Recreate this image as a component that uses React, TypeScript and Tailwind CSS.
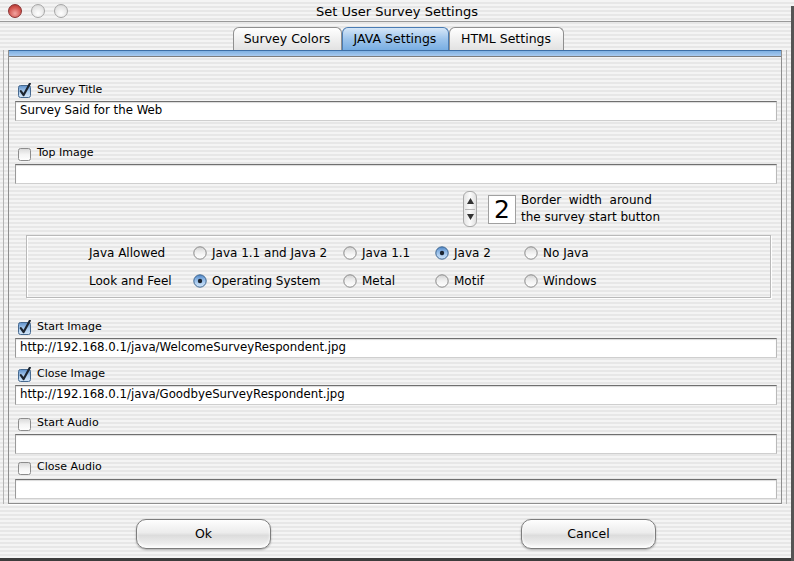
import React from "react";

const stripes =
  "bg-[repeating-linear-gradient(to_bottom,#f4f4f4_0px,#f4f4f4_2px,#e7e7e7_2px,#e7e7e7_4px)]";

const CheckBox = ({ checked }: { checked: boolean }) => (
  <svg width="15" height="15" viewBox="0 0 15 15" className="shrink-0">
    <defs>
      <linearGradient id="cbOff" x1="0" y1="0" x2="0" y2="1">
        <stop offset="0" stopColor="#d8d8d8" />
        <stop offset="0.5" stopColor="#f4f4f4" />
        <stop offset="1" stopColor="#ffffff" />
      </linearGradient>
      <linearGradient id="cbOn" x1="0" y1="0" x2="0" y2="1">
        <stop offset="0" stopColor="#5d8fc9" />
        <stop offset="0.5" stopColor="#a9cbee" />
        <stop offset="1" stopColor="#d4e6f8" />
      </linearGradient>
    </defs>
    <rect
      x="1.5"
      y="2.5"
      width="12"
      height="12"
      rx="2"
      fill={checked ? "url(#cbOn)" : "url(#cbOff)"}
      stroke={checked ? "#46698f" : "#8c8c8c"}
    />
    {checked && (
      <path
        d="M3.8 8.2 L6.6 12 L12.8 0.8"
        fill="none"
        stroke="#1d2530"
        strokeWidth="2.2"
        strokeLinecap="round"
        strokeLinejoin="round"
      />
    )}
  </svg>
);

const Radio = ({ checked }: { checked: boolean }) => (
  <svg width="14" height="14" viewBox="0 0 14 14" className="shrink-0">
    <defs>
      <linearGradient id="rOff" x1="0" y1="0" x2="0" y2="1">
        <stop offset="0" stopColor="#d2d2d2" />
        <stop offset="0.5" stopColor="#f2f2f2" />
        <stop offset="1" stopColor="#ffffff" />
      </linearGradient>
      <linearGradient id="rOn" x1="0" y1="0" x2="0" y2="1">
        <stop offset="0" stopColor="#4f86c6" />
        <stop offset="0.5" stopColor="#9fc4ec" />
        <stop offset="1" stopColor="#d2e5f8" />
      </linearGradient>
    </defs>
    <circle
      cx="7"
      cy="7"
      r="6.2"
      fill={checked ? "url(#rOn)" : "url(#rOff)"}
      stroke={checked ? "#3f6690" : "#8a8a8a"}
    />
    {checked && <circle cx="7" cy="7" r="2.2" fill="#1b2430" />}
  </svg>
);

const Field = ({ value = "" }: { value?: string }) => (
  <div className="ml-[6px] mr-[4px] flex h-[20px] items-center border border-t-[#6f6f6f] border-r-[#b9b9b9] border-b-[#cfcfcf] border-l-[#9a9a9a] bg-white pl-[4px] text-[11.75px] text-black shadow-[inset_0_1px_1px_rgba(0,0,0,0.15)]">
    {value}
  </div>
);

const CheckRow = ({
  label,
  checked,
  className,
}: {
  label: string;
  checked: boolean;
  className: string;
}) => (
  <div className={`flex h-[14px] items-center gap-[5px] pl-[8px] text-[11px] text-black ${className}`}>
    <CheckBox checked={checked} />
    <span>{label}</span>
  </div>
);

const RadioItem = ({
  label,
  checked,
  width,
}: {
  label: string;
  checked?: boolean;
  width: string;
}) => (
  <div className={`flex items-center gap-[5px] ${width}`}>
    <Radio checked={!!checked} />
    <span>{label}</span>
  </div>
);

const Tab = ({ label, active }: { label: string; active?: boolean }) => (
  <div
    className={
      active
        ? "flex h-[23px] w-[107px] items-center justify-center rounded-t-[6px] border border-b-0 border-[#4a7cb3] bg-[linear-gradient(to_bottom,#d6e7f8,#9ec5ec_50%,#79aee2)] text-[12.5px] text-black"
        : "flex h-[23px] items-center justify-center rounded-t-[6px] border border-b-0 border-[#8f8f8f] bg-[linear-gradient(to_bottom,#ffffff,#f0f0f0_50%,#e2e2e2)] text-[12.5px] text-black"
    }
  >
    {label}
  </div>
);

const AquaButton = ({ label }: { label: string }) => (
  <div className="flex h-[30px] w-[135px] items-center justify-center rounded-[10px] border border-[#7d7d7d] bg-[linear-gradient(to_bottom,#fefefe,#ececec_45%,#dcdcdc_55%,#f6f6f6)] text-[12.5px] text-black shadow-[0_1px_2px_rgba(0,0,0,0.3),inset_0_-2px_3px_rgba(255,255,255,0.9)]">
    {label}
  </div>
);

export default function App() {
  return (
    <div
      className={`relative h-[561px] w-[794px] overflow-hidden ${stripes} font-['DejaVu_Sans',sans-serif]`}
    >
      {/* title bar */}
      <div className="relative flex h-[22px] items-center border-b border-[#9a9a9a]">
        <div className="flex items-center gap-[9px] pl-[8px]">
          <div className="h-[14px] w-[14px] rounded-full border border-[#8a3030] bg-[radial-gradient(circle_at_50%_70%,#f3a4a0,#d0524c_60%,#a02c28)]" />
          <div className="h-[14px] w-[14px] rounded-full border border-[#a6a6a6] bg-[radial-gradient(circle_at_50%_70%,#ffffff,#e6e6e6_60%,#cfcfcf)]" />
          <div className="h-[14px] w-[14px] rounded-full border border-[#a6a6a6] bg-[radial-gradient(circle_at_50%_70%,#ffffff,#e6e6e6_60%,#cfcfcf)]" />
        </div>
        <div className="absolute inset-x-0 top-[1px] flex h-[21px] items-center justify-center text-[13px] text-black">
          Set User Survey Settings
        </div>
      </div>

      {/* tabs */}
      <div className="flex h-[28px] items-end justify-center pl-[2px]">
        <div className="flex">
          <div className="w-[109px]">
            <Tab label="Survey Colors" />
          </div>
          <Tab label="JAVA Settings" active />
          <div className="w-[115px]">
            <Tab label="HTML Settings" />
          </div>
        </div>
      </div>

      {/* panel */}
      <div className="ml-[3px] mr-[7px] border-x border-[#b4b4b4] px-[4px]">
        <div className="flex h-[454px] flex-col border-x border-b border-[#8e8e8e] shadow-[0_1px_0_#ffffff]">
          <div className="h-[6px] border-t border-[#3d6fa6] bg-[linear-gradient(to_bottom,#7fb0e2,#a9cbef)]" />
          <div className="h-px bg-[#7d7d7d]" />

          <CheckRow label="Survey Title" checked className="mt-[26px]" />
          <div className="mt-[4px]">
            <Field value="Survey Said for the Web" />
          </div>

          <CheckRow label="Top Image" checked={false} className="mt-[25px]" />
          <div className="mt-[4px]">
            <Field />
          </div>

          {/* border width spinner */}
          <div className="mt-[7px] flex h-[36px] items-center pl-[454px]">
            <div className="flex h-[36px] w-[14px] flex-col items-center justify-between rounded-[6px] border border-[#a9a9a9] bg-[linear-gradient(to_right,#e4e4e4,#fbfbfb,#e0e0e0)] py-[6px]">
              <svg width="7" height="6" viewBox="0 0 7 6">
                <path d="M3.5 0 L7 6 L0 6 Z" fill="#333" />
              </svg>
              <div className="h-px w-[10px] bg-[#b8b8b8]" />
              <svg width="7" height="6" viewBox="0 0 7 6">
                <path d="M0 0 L7 0 L3.5 6 Z" fill="#333" />
              </svg>
            </div>
            <div className="ml-[11px] flex h-[29px] w-[28px] items-center justify-center border border-[#a0a0a0] bg-white text-[25px] font-medium leading-none text-black">
              2
            </div>
            <div className="ml-[5px] flex flex-col text-[12px] leading-[17px] text-black">
              <span>Border&nbsp; width&nbsp; around</span>
              <span>the survey start button</span>
            </div>
          </div>

          {/* group box */}
          <div className="ml-[17px] mr-[10px] mt-[8px] flex h-[63px] flex-col justify-center gap-[10px] border border-[#b9b9b9] pl-[62px] text-[12px] text-black shadow-[inset_1px_1px_0_#ffffff,1px_1px_0_#ffffff]">
            <div className="flex h-[18px] items-center">
              <span className="w-[104px]">Java Allowed</span>
              <RadioItem label="Java 1.1 and Java 2" width="w-[150px]" />
              <RadioItem label="Java 1.1" width="w-[92px]" />
              <RadioItem label="Java 2" checked width="w-[89px]" />
              <RadioItem label="No Java" width="w-[90px]" />
            </div>
            <div className="flex h-[18px] items-center">
              <span className="w-[104px]">Look and Feel</span>
              <RadioItem label="Operating System" checked width="w-[150px]" />
              <RadioItem label="Metal" width="w-[92px]" />
              <RadioItem label="Motif" width="w-[89px]" />
              <RadioItem label="Windows" width="w-[90px]" />
            </div>
          </div>

          <CheckRow label="Start Image" checked className="mt-[22px]" />
          <div className="mt-[4px]">
            <Field value="http://192.168.0.1/java/WelcomeSurveyRespondent.jpg" />
          </div>

          <CheckRow label="Close Image" checked className="mt-[9px]" />
          <div className="mt-[4px]">
            <Field value="http://192.168.0.1/java/GoodbyeSurveyRespondent.jpg" />
          </div>

          <CheckRow label="Start Audio" checked={false} className="mt-[11px]" />
          <div className="mt-[4px]">
            <Field />
          </div>

          <CheckRow label="Close Audio" checked={false} className="mt-[6px]" />
          <div className="mt-[5px]">
            <Field />
          </div>
        </div>
      </div>

      {/* buttons */}
      <div className="mt-[15px] flex h-[30px] pl-[136px]">
        <AquaButton label="Ok" />
        <div className="ml-[250px]">
          <AquaButton label="Cancel" />
        </div>
      </div>

      {/* window frame */}
      <div className="absolute bottom-0 left-0 h-[3px] w-full bg-[#3c3c3c]" />
      <div className="absolute right-0 top-[6px] h-full w-[3px] bg-[#555555]" />
    </div>
  );
}
